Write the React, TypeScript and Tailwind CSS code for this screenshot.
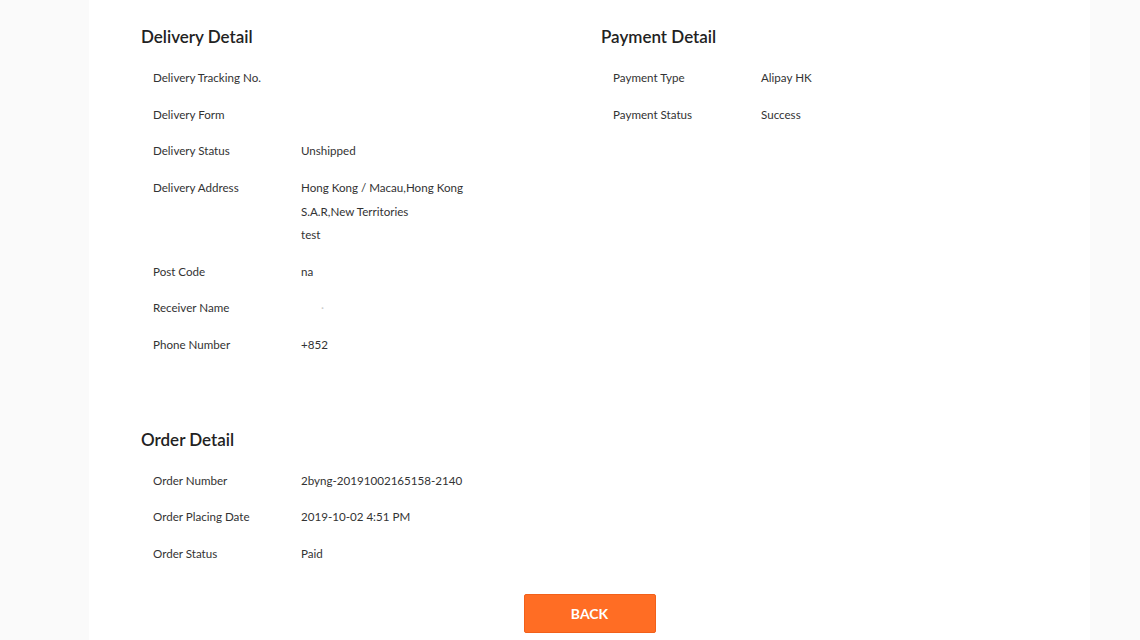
import React from 'react'

type Row = { label: string; value?: React.ReactNode }

const delivery: Row[] = [
  { label: 'Delivery Tracking No.' },
  { label: 'Delivery Form' },
  { label: 'Delivery Status', value: 'Unshipped' },
  {
    label: 'Delivery Address',
    value: (
      <>
        Hong Kong / Macau,Hong Kong
        <br />
        S.A.R,New Territories
        <br />
        test
      </>
    ),
  },
  { label: 'Post Code', value: 'na' },
  { label: 'Receiver Name', value: <span className="pl-5 text-[#ccc]">·</span> },
  { label: 'Phone Number', value: '+852' },
]

const payment: Row[] = [
  { label: 'Payment Type', value: 'Alipay HK' },
  { label: 'Payment Status', value: 'Success' },
]

const order: Row[] = [
  { label: 'Order Number', value: '2byng-20191002165158-2140' },
  { label: 'Order Placing Date', value: '2019-10-02 4:51 PM' },
  { label: 'Order Status', value: 'Paid' },
]

function Section({ title, rows }: { title: string; rows: Row[] }) {
  return (
    <div>
      <h2 className="text-[17px] font-semibold leading-6 text-[#222]">{title}</h2>
      <div className="mt-[17px] flex flex-col gap-[13.2px] pl-3">
        {rows.map((r) => (
          <div key={r.label} className="flex text-[11.6px] leading-[23.5px] text-[#333]">
            <div className="w-[148px] shrink-0">{r.label}</div>
            <div>{r.value}</div>
          </div>
        ))}
      </div>
    </div>
  )
}

export default function App() {
  return (
    <div className="min-h-screen bg-[#fafafa] pl-[89px] pr-[50px] font-['Lato','Liberation_Sans',sans-serif]">
      <div className="min-h-screen bg-white px-[52px] pt-[25px] pb-6">
        <div className="grid grid-cols-[460px_1fr]">
          <Section title="Delivery Detail" rows={delivery} />
          <Section title="Payment Detail" rows={payment} />
        </div>
        <div className="mt-[71px]">
          <Section title="Order Detail" rows={order} />
        </div>
        <div className="mt-[28px] flex justify-center">
          <button className="h-[39px] w-[132px] rounded-[2px] border border-[#f2601a] bg-[#ff6d24] text-[14px] font-bold text-white">
            BACK
          </button>
        </div>
      </div>
    </div>
  )
}
